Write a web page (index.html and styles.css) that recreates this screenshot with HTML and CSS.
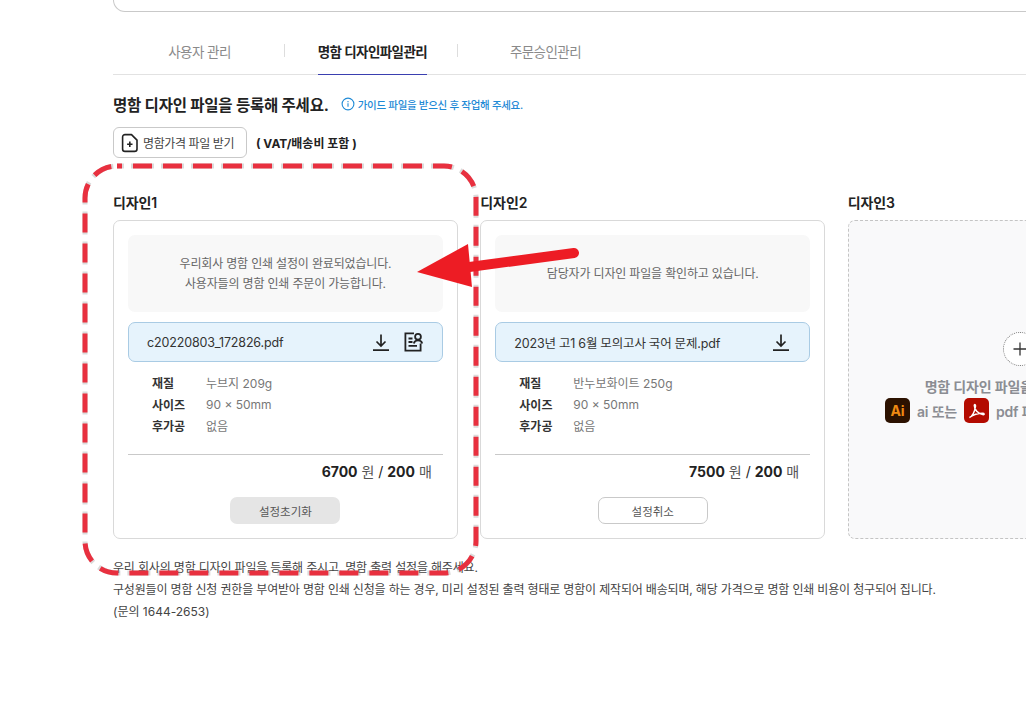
FILE: index.html
```html
<!DOCTYPE html>
<html lang="ko">
<head>
    <meta charset="utf-8">
    <title>명함 디자인파일관리</title>
    <link rel="stylesheet" href="styles.css">
</head>
<body>
    <div class="page">
        <div class="search-box"></div>

        <div class="tabs">
            <a class="tab">사용자 관리</a>
            <a class="tab active"><span>명함 디자인파일관리</span></a>
            <a class="tab">주문승인관리</a>
        </div>

        <div class="title-row">
            <h2>명함 디자인 파일을 등록해 주세요.</h2>
            <span class="guide">
                <svg width="14" height="14" viewBox="0 0 14 14" fill="none" stroke="#1f8ad6" stroke-width="1.1">
                    <circle cx="7" cy="7" r="5.9"/>
                    <path d="M7 6.2v3.6M7 4.1v1.1"/>
                </svg>
                가이드 파일을 받으신 후 작업해 주세요.
            </span>
        </div>

        <div class="price-row">
            <button class="price-button">
                <svg width="18" height="20" viewBox="0 0 18 20" fill="none" stroke="#222" stroke-width="1.6" stroke-linejoin="round">
                    <path d="M4 1.600h6.500L16 7.100V16a2.400 2.400 0 0 1-2.400 2.400H4A2.400 2.400 0 0 1 1.600 16V4A2.400 2.400 0 0 1 4 1.600z"/>
                    <path d="M8.800 8.500v5.400M6.100 11.200h5.400"/>
                </svg>
                명함가격 파일 받기
            </button>
            <strong>( VAT/배송비 포함 )</strong>
        </div>

        <div class="designs">
            <section class="design">
                <h3>디자인1</h3>
                <div class="card">
                    <div class="notice">우리회사 명함 인쇄 설정이 완료되었습니다.<br>사용자들의 명함 인쇄 주문이 가능합니다.</div>
                    <div class="file">
                        <span class="file-name">c20220803_172826.pdf</span>
                        <svg class="icon" width="20" height="20" viewBox="0 0 20 20" fill="none" stroke="#222" stroke-width="1.700">
                            <path d="M10 2.500v11M5.500 9.500 10 14l4.500-4.500M2 18.200h16"/>
                        </svg>
                        <svg class="icon" width="20" height="20" viewBox="0 0 20 20" fill="none" stroke="#222" stroke-width="1.800">
                            <path d="M10 1.400H1.400v17.200h15.200v-7"/>
                            <circle cx="14" cy="4.800" r="2.900"/>
                            <path d="M9.800 11.400c.6-2.200 2.200-3 4.200-3s3.600.8 4.200 3M4.500 6.500h4M4.500 10h4M4.500 13.800h8.500"/>
                        </svg>
                    </div>
                    <dl class="specs">
                        <dt>재질</dt><dd>누브지 209g</dd>
                        <dt>사이즈</dt><dd>90 × 50mm</dd>
                        <dt>후가공</dt><dd>없음</dd>
                    </dl>
                    <div class="price"><b>6700</b> 원 <b class="slash">/</b> <b>200</b> 매</div>
                    <button class="btn btn-gray">설정초기화</button>
                </div>
            </section>

            <section class="design">
                <h3>디자인2</h3>
                <div class="card">
                    <div class="notice">담당자가 디자인 파일을 확인하고 있습니다.</div>
                    <div class="file">
                        <span class="file-name">2023년 고1 6월 모의고사 국어 문제.pdf</span>
                        <svg class="icon" width="20" height="20" viewBox="0 0 20 20" fill="none" stroke="#222" stroke-width="1.700">
                            <path d="M10 2.500v11M5.500 9.500 10 14l4.500-4.500M2 18.200h16"/>
                        </svg>
                    </div>
                    <dl class="specs">
                        <dt>재질</dt><dd>반누보화이트 250g</dd>
                        <dt>사이즈</dt><dd>90 × 50mm</dd>
                        <dt>후가공</dt><dd>없음</dd>
                    </dl>
                    <div class="price"><b>7500</b> 원 <b class="slash">/</b> <b>200</b> 매</div>
                    <button class="btn btn-white">설정취소</button>
                </div>
            </section>

            <section class="design">
                <h3>디자인3</h3>
                <div class="card card-empty">
                    <div class="plus">
                        <svg width="14" height="14" viewBox="0 0 14 14" stroke="#333" stroke-width="1.300"><path d="M7 .5v13M.5 7h13"/></svg>
                    </div>
                    <p class="empty-text">명함 디자인 파일을 등록해 주세요</p>
                    <div class="empty-types">
                        <span class="badge badge-ai">Ai</span>
                        <span>ai 또는</span>
                        <span class="badge badge-pdf">
                            <svg width="19" height="19" viewBox="0 0 19 19" fill="none" stroke="#fff" stroke-width="1.500">
                                <path d="M2.500 16.500c3-1.500 5-5 6-11 .3-2-1.200-2.700-1.200-1 0 4 3.500 8.500 9 9.200 1.300 0 1-1.500-.5-1.500-4 0-9.500 1.500-13.300 4.300z"/>
                            </svg>
                        </span>
                        <span>pdf 파일을 업로드해 주세요</span>
                    </div>
                </div>
            </section>
        </div>

        <div class="footnote">
            <p>우리 회사의 명함 디자인 파일을 등록해 주시고, 명함 출력 설정을 해주세요.</p>
            <p>구성원들이 명함 신청 권한을 부여받아 명함 인쇄 신청을 하는 경우, 미리 설정된 출력 형태로 명함이 제작되어 배송되며, 해당 가격으로 명함 인쇄 비용이 청구되어 집니다.</p>
            <p class="contact">(문의 1644-2653)</p>
        </div>
    </div>

    <!-- 강조 표시 -->
    <svg class="markup" width="1026" height="709" viewBox="0 0 1026 709" fill="none">
        <rect x="85" y="166" width="391" height="407" rx="32" stroke="#999" stroke-opacity=".35" stroke-width="5" stroke-dasharray="23 7" stroke-dashoffset="-14"/>
        <rect x="85" y="166" width="391" height="407" rx="32" stroke="#e8303f" stroke-width="5" stroke-dasharray="19 11" stroke-dashoffset="-16"/>
        <path d="M574 253 462 268" stroke="#ed1c24" stroke-width="10" stroke-linecap="round"/>
        <path d="M417 272 468 244 472 287z" fill="#ed1c24"/>
    </svg>
</body>
</html>
```

FILE: styles.css
```css
* {
    box-sizing: border-box;
}

html, body {
    margin: 0;
    height: 709px;
    overflow: hidden;
    background-color: #fff;
}

body {
    font-family: Inter, "Noto Sans CJK KR", sans-serif;
    color: #222;
    position: relative;
}

.page {
    padding-left: 113px;
    width: 1400px;
}

.search-box {
    height: 12px;
    border: 1px solid #c9c9c9;
    border-top: none;
    border-radius: 0 0 14px 14px;
}

.tabs {
    display: flex;
    width: 913px;
    height: 63px;
    border-bottom: 1px solid #e2e2e2;
}

.tab {
    width: 173px;
    padding-top: 30px;
    text-align: center;
    font-size: 13.500px;
    letter-spacing: -.55px;
    line-height: 20px;
    color: #8a8a8a;
    position: relative;
}

.tab.active {
    color: #222;
    font-weight: 700;
}

.tab.active span {
    display: inline-block;
    height: 33px;
    border-bottom: 1px solid #3a3fb0;
}

.tab.active::before,
.tab.active::after {
    content: "";
    position: absolute;
    top: 32px;
    width: 1px;
    height: 13px;
    background-color: #ddd;
}

.tab.active::before {
    left: -2px;
}

.tab.active::after {
    right: 1px;
}

.title-row {
    display: flex;
    align-items: center;
    gap: 12px;
    margin-top: 19px;
    height: 20px;
}

.title-row h2 {
    margin: 0;
    font-size: 15.500px;
    letter-spacing: -.2px;
    font-weight: 700;
    color: #222;
}

.guide {
    display: flex;
    align-items: center;
    gap: 3px;
    font-size: 10.500px;
    letter-spacing: -.3px;
    font-weight: 500;
    color: #1f8ad6;
}

.price-row {
    display: flex;
    align-items: center;
    gap: 9px;
    margin-top: 13px;
}

.price-row strong {
    font-size: 12px;
    color: #222;
}

.price-button {
    display: flex;
    align-items: center;
    gap: 4px;
    width: 134px;
    height: 31px;
    padding: 0 7px;
    font-family: inherit;
    font-size: 12px;
    letter-spacing: -.4px;
    white-space: nowrap;
    color: #444;
    background-color: #fff;
    border: 1px solid #c9c9c9;
    border-radius: 6px;
}

.designs {
    display: flex;
    gap: 22.500px;
    margin-top: 35px;
}

.design {
    width: 344.830px;
}

.design h3 {
    margin: 0 0 7px;
    font-size: 14px;
    line-height: 20px;
    font-weight: 600;
    letter-spacing: -.1px;
    color: #222;
}

.card {
    height: 319px;
    padding: 14px;
    border: 1px solid #d9d9d9;
    border-radius: 7px;
    text-align: center;
}

.notice {
    display: flex;
    align-items: center;
    justify-content: center;
    height: 77px;
    font-size: 12px;
    letter-spacing: -.17px;
    line-height: 20px;
    color: #666;
    background-color: #f8f8f8;
    border-radius: 7px;
}

.file {
    display: flex;
    align-items: center;
    gap: 13px;
    height: 40px;
    margin-top: 10px;
    padding: 0 18px;
    font-size: 12.500px;
    letter-spacing: -.15px;
    word-spacing: -.3px;
    color: #333;
    background-color: #e6f3fc;
    border: 1px solid #a9cbe4;
    border-radius: 7px;
}

.file-name {
    flex: 1;
    text-align: left;
}

.specs {
    display: grid;
    grid-template-columns: 54px 1fr;
    grid-auto-rows: 21.500px;
    align-content: start;
    align-items: center;
    margin: 10px 0 0;
    padding: 0 24px;
    height: 83px;
    border-bottom: 1px solid #c9c9c9;
    text-align: left;
    font-size: 12px;
}

.specs dt {
    font-weight: 600;
    color: #333;
}

.specs dd {
    margin: 0;
    color: #777;
}

.price {
    margin-top: 7px;
    padding-right: 11px;
    text-align: right;
    font-size: 14px;
    line-height: 20px;
    color: #555;
}

.price b {
    font-weight: 700;
    color: #222;
}

.price .slash {
    font-weight: 400;
}

.btn {
    display: block;
    width: 110px;
    height: 27px;
    margin: 15px auto 0;
    font-family: inherit;
    font-size: 11.500px;
    color: #555;
    border-radius: 7px;
}

.btn-gray {
    background-color: #e5e5e5;
    border: none;
}

.btn-white {
    background-color: #fff;
    border: 1px solid #c9c9c9;
}

.card-empty {
    display: flex;
    flex-direction: column;
    align-items: center;
    padding: 111px 0 0;
    background-color: #f9f9fa;
    border: 1px dashed #c4c4c4;
}

.plus {
    display: flex;
    align-items: center;
    justify-content: center;
    width: 34px;
    height: 34px;
    margin-right: 1px;
    background-color: #fff;
    border: 1px dotted #777;
    border-radius: 50%;
}

.empty-text {
    margin: 11px 0 0;
    font-size: 14px;
    letter-spacing: -.2px;
    line-height: 20px;
    font-weight: 600;
    color: #8b8d93;
    white-space: nowrap;
}

.empty-types {
    display: flex;
    align-items: center;
    gap: 7px;
    margin-top: 1px;
    font-size: 14px;
    letter-spacing: -.2px;
    font-weight: 600;
    color: #8b8d93;
    white-space: nowrap;
}

.badge {
    display: flex;
    align-items: center;
    justify-content: center;
    width: 25px;
    height: 25px;
    border-radius: 5px;
}

.badge-ai {
    font-size: 14px;
    font-weight: 700;
    color: #f08a12;
    background-color: #2c1200;
}

.badge-pdf {
    background-color: #b30b00;
}

.footnote {
    margin-top: 18px;
    font-size: 12px;
    letter-spacing: -.17px;
    line-height: 22px;
    color: #444;
}

.footnote p {
    margin: 0;
}

.footnote .contact {
    letter-spacing: 0;
}

.markup {
    position: absolute;
    left: 0;
    top: 0;
    pointer-events: none;
}
```
